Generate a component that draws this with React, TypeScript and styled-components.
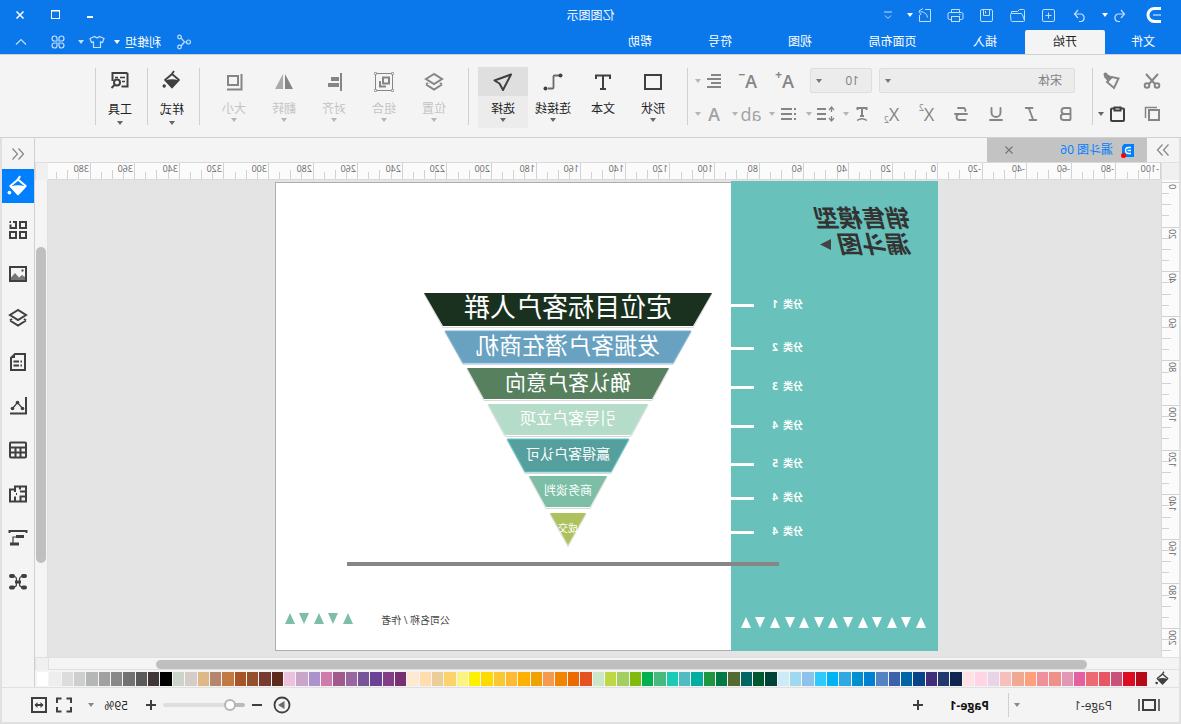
import React, { useEffect, useRef, useState } from "react";
import styled, { createGlobalStyle, css } from "styled-components";
import { Bold, Italic, Underline, Strikethrough } from "lucide-react";

const color = {
  brand: "#0a77eb",
  accent: "#0080ff",
  surface: "#f4f4f4",
  canvas: "#e4e4e4",
  line: "#d0d0d0",
  frame: "#e0e0e0",
  thumb: "#bfbfbf",
  ink: "#3f3f3f",
  icon: "#858585",
  faint: "#c4c4c4",
};

const GlobalStyle = createGlobalStyle`
  * { box-sizing: border-box; }
  body { margin: 0; background: ${color.surface}; }
  body, button, select, input {
    font-family: "Open Sans", "Noto Sans CJK SC", sans-serif;
    font-size: 12px;
  }
  svg { display: block; flex: none; }
`;

const Window = styled.div`
  display: flex;
  flex-direction: column;
  min-height: 100vh;
  transform: scaleX(-1);
  background: ${color.surface};
  color: #222;
`;

const PlainButton = styled.button`
  display: flex;
  align-items: center;
  justify-content: center;
  padding: 0;
  border: 0;
  background: none;
  color: inherit;
  cursor: pointer;
`;

/* ---------- icons ---------- */

type IconProps = { w?: number; h?: number; sw?: number; children: React.ReactNode };
const Icon = ({ w = 20, h = 20, sw = 1, children }: IconProps) => (
  <svg width={w} height={h} viewBox={`0 0 ${w} ${h}`} fill="none" stroke="currentColor" strokeWidth={sw} aria-hidden="true">
    {children}
  </svg>
);

const Caret = () => (
  <svg width="8" height="4" viewBox="0 0 8 4" fill="currentColor" aria-hidden="true">
    <path d="M1 0h6L4 4z" />
  </svg>
);

const LogoIcon = () => (
  <Icon w={16} h={18} sw={3}>
    <path d="M1 2.500h6.500a6.500 6.500 0 0 1 0 13H1" />
    <path d="M1 9h8" stroke="#7ab8fb" strokeWidth="2" />
  </Icon>
);
const UndoIcon = () => (
  <Icon w={19} h={19} sw={1.2}>
    <path d="M8 4L4.500 8L8 12M4.500 8h7a4 4 0 0 1 0 7.500H9" />
  </Icon>
);
const RedoIcon = () => (
  <Icon w={19} h={19} sw={1.2}>
    <path d="M11 4l3.500 4L11 12M14.500 8h-7a4 4 0 0 0 0 7.500H10" />
  </Icon>
);
const NewIcon = () => (
  <Icon w={19} h={19}>
    <rect x="3.500" y="3.500" width="12" height="12" rx="1.500" />
    <path d="M9.500 6.500v6M6.500 9.500h6" />
  </Icon>
);
const OpenIcon = () => (
  <Icon w={19} h={19}>
    <path d="M2.500 14.500v-10q0-1 1-1h4l2 2h6v2M2.500 14.500q0 1 1 1h11q1.300 0 1.500-1l.5-6q0-1-1-1H6q-1 0-1.300 1z" />
  </Icon>
);
const SaveIcon = () => (
  <Icon w={19} h={19}>
    <rect x="3.500" y="3.500" width="12" height="12" rx="1.500" />
    <path d="M6.500 3.500v6h6v-6M10.500 5v2.500" />
  </Icon>
);
const PrintIcon = () => (
  <Icon w={19} h={19}>
    <path d="M5.500 6.500v-3h8v3M5.500 13.500h-2q-1.500 0-1.500-1.500V8q0-1.500 1.500-1.500h12q1.500 0 1.500 1.500v4q0 1.500-1.500 1.500h-2" />
    <rect x="5.500" y="10.500" width="8" height="5" />
    <path d="M4.500 8.500h1.500" />
  </Icon>
);
const ExportIcon = () => (
  <Icon w={19} h={19}>
    <path d="M9 3.500H3.500v12h11V9" />
    <path d="M6.500 11.500q.5-5 7-6M11 2.500l4 2.500-2 4" />
  </Icon>
);
const MoreIcon = () => (
  <Icon w={12} h={12}>
    <path d="M2 3h8M3 6.500l3 3 3-3" />
  </Icon>
);
const MinimizeIcon = () => (
  <Icon w={12} h={12} sw={2}>
    <path d="M3 8h6" />
  </Icon>
);
const MaximizeIcon = () => (
  <Icon w={12} h={12}>
    <rect x="1.500" y="1.500" width="8" height="8" />
    <path d="M1 2h9" />
  </Icon>
);
const CloseIcon = () => (
  <Icon w={12} h={12} sw={1.5}>
    <path d="M2.500 2.500l7 7M9.500 2.500l-7 7" />
  </Icon>
);
const ShareIcon = () => (
  <Icon w={16} h={16} sw={1.2}>
    <circle cx="3.500" cy="8" r="2" />
    <circle cx="12.500" cy="3" r="1.800" />
    <circle cx="12.500" cy="13" r="1.800" />
    <path d="M5.500 8h2l3.500-4M7.500 8l3.500 4" />
  </Icon>
);
const ShirtIcon = () => (
  <Icon w={16} h={16} sw={1.2}>
    <path d="M5.500 2.500q2.500 2.500 5 0l4.500 2-1.500 4-2-.7v5.700h-7V7.800l-2 .7L1 4.500z" />
  </Icon>
);
const AppsIcon = () => (
  <Icon w={16} h={16} sw={1.2}>
    <path d="M7 7H4.300A2.500 2.500 0 1 1 7 4.300zM9 7V4.300A2.500 2.500 0 1 1 11.700 7zM7 9v2.700A2.500 2.500 0 1 1 4.300 9zM9 9h2.700A2.500 2.500 0 1 1 9 11.700z" />
  </Icon>
);
const CollapseIcon = () => (
  <Icon w={16} h={16} sw={1.2}>
    <path d="M3 10.500L8 5.500l5 5" />
  </Icon>
);

const CutIcon = () => (
  <Icon sw={2}>
    <path d="M4 3l9 10M16 3L7 13" />
    <circle cx="5" cy="14.500" r="2.300" />
    <circle cx="15" cy="14.500" r="2.300" />
  </Icon>
);
const PainterIcon = () => (
  <Icon sw={2}>
    <path d="M3.500 7.500L10 6l5 5-7 6z" />
    <path d="M9.500 6L17 2l1 4-4 4.500z" fill="currentColor" stroke="none" />
    <circle cx="16.500" cy="3.500" r="2" fill="currentColor" stroke="none" />
  </Icon>
);
const CopyIcon = () => (
  <Icon>
    <path d="M16.500 14V3.500H5" strokeWidth="1.500" />
    <rect x="3" y="6" width="10" height="10" strokeWidth="2" />
  </Icon>
);
const PasteIcon = () => (
  <Icon sw={2}>
    <path d="M7 4.500H4q-1 0-1 1V16q0 1 1 1h11q1 0 1-1V5.500q0-1-1-1h-3" />
    <path d="M6.500 3.500h6v3h-6z" />
  </Icon>
);
const ParagraphIcon = () => (
  <Icon sw={2}>
    <path d="M3 4h10M3 8h14M3 12h10M3 16h14" strokeWidth="1.800" />
  </Icon>
);
const LineSpacingIcon = () => (
  <Icon sw={2}>
    <path d="M9 5h9M9 10h9M9 15h9" />
    <path d="M3.500 3v5M1 6l2.500-3L6 6M3.500 12v5M1 14l2.500 3L6 14" strokeWidth="1.300" />
  </Icon>
);
const BulletsIcon = () => (
  <Icon sw={2}>
    <path d="M6 5h11M6 10h11M6 15h11M3 4v2M3 9v2M3 14v2" />
  </Icon>
);
const TextStyleIcon = () => (
  <Icon sw={2}>
    <path d="M5.500 6V4h9v2M10 4v8M8 12h4" />
    <path d="M5 16.500q5-3.500 10 0" strokeWidth="1.500" />
  </Icon>
);
const ShapeIcon = () => (
  <Icon sw={2}>
    <rect x="2" y="3" width="16" height="14" />
  </Icon>
);
const TextIcon = () => (
  <Icon sw={2}>
    <path d="M3 7V3.500h14V7M10 3.500V17M7 17h6" />
  </Icon>
);
const ConnectorIcon = () => (
  <Icon sw={2}>
    <path d="M4 3.500h4.500q1 0 1 1v11q0 1 1 1H15" stroke="#6b6b6b" strokeWidth="1.800" />
    <circle cx="2.500" cy="3.500" r="2" fill="currentColor" stroke="none" />
    <circle cx="17.500" cy="16.500" r="2" fill="currentColor" stroke="none" />
  </Icon>
);
const SelectIcon = () => (
  <Icon sw={2}>
    <path d="M2 2.500L18.500 8.500 13.500 11.500 10 18z" strokeLinejoin="round" />
  </Icon>
);
const LayersIcon = () => (
  <Icon sw={2}>
    <path d="M10 2l8 5-8 5-8-5z" />
    <path d="M2 12.500l8 5 8-5M2 12.500l2-1.500M18 12.500L16 11" />
  </Icon>
);
const GroupIcon = () => (
  <Icon>
    <rect x="1.500" y="1.500" width="17" height="17" />
    <g fill="#f4f4f4">
      <circle cx="1.500" cy="1.500" r="1.200" />
      <circle cx="18.500" cy="1.500" r="1.200" />
      <circle cx="1.500" cy="18.500" r="1.200" />
      <circle cx="18.500" cy="18.500" r="1.200" />
    </g>
    <g strokeWidth="2">
      <rect x="5" y="5.500" width="6" height="6" />
      <path d="M14 9v5.500H8" />
    </g>
  </Icon>
);
const AlignIcon = () => (
  <Icon>
    <path d="M3 1v18" strokeWidth="2" />
    <path d="M5 5h8v4H5zM5 11h11v4H5z" fill="currentColor" stroke="none" />
  </Icon>
);
const FlipIcon = () => (
  <Icon>
    <path d="M9 2v15H1z" fill="#858585" stroke="none" />
    <path d="M11 2v15h8z" fill="#aaaaaa" stroke="none" />
  </Icon>
);
const SizeIcon = () => (
  <Icon sw={2}>
    <rect x="6" y="4" width="10" height="9" />
    <path d="M2.500 2v15.500H17" />
  </Icon>
);
const BucketIcon = ({ size = 20 }: { size?: number }) => (
  <svg width={size} height={size} viewBox="0 0 20 20" fill="none" stroke="currentColor" strokeWidth="1.800" aria-hidden="true">
    <path d="M8 1l2.500 3.500L17 10l-7 7.500L3 10l7-6" strokeLinejoin="round" />
    <path d="M3.500 10.500q6.500-2.500 13 0L10 17.500z" fill="currentColor" stroke="none" />
    <circle cx="17.800" cy="16" r="1.700" fill="currentColor" stroke="none" />
  </svg>
);
const ToolsIcon = () => (
  <Icon sw={2}>
    <path d="M2.500 3v13.500h6M2.500 3h15v8" />
    <path d="M12 7.500h3M5 7.500h5M5 11.500h3" strokeWidth="1.300" />
    <circle cx="13" cy="12.500" r="3" fill="#f4f4f4" />
    <path d="M15 14.500l3.500 3.500" />
  </Icon>
);
const ChevronsRight = () => (
  <Icon w={14} h={14} sw={1.2}>
    <path d="M1.500 1.500L6.500 7l-5 5.500M7.500 1.500L12.500 7l-5 5.500" />
  </Icon>
);
const ChevronsLeft = () => (
  <Icon w={14} h={14} sw={1.2}>
    <path d="M12.500 1.500L7.500 7l5 5.500M6.500 1.500L1.500 7l5 5.500" />
  </Icon>
);
const FileIcon = () => (
  <svg width="14" height="15" viewBox="0 0 14 15" aria-hidden="true">
    <path d="M1 1h10l2 2.500V14H1z" fill={color.accent} />
    <path d="M4 4.500h2.500a3 3 0 0 1 0 6H4M4 7.500h3.500" fill="none" stroke="#fff" strokeWidth="1.300" />
    <circle cx="11.500" cy="12.500" r="2.500" fill="#f00" />
  </svg>
);
const GridIcon = () => (
  <Icon sw={2}>
    <rect x="2" y="2" width="6" height="6" />
    <path d="M17.500 4.500V8H12V2h3M17 2h1.500" />
    <rect x="2" y="12" width="6" height="6" />
    <rect x="12" y="12" width="6" height="6" />
  </Icon>
);
const ImageIcon = () => (
  <Icon sw={2}>
    <rect x="2" y="3" width="16" height="14" />
    <path d="M3 16v-3l3-2 3 2.500L13 9l4 4.500V16z" fill="#777" stroke="none" />
    <rect x="4.500" y="5.500" width="2" height="2" fill="currentColor" stroke="none" />
  </Icon>
);
const NoteIcon = () => (
  <Icon sw={2}>
    <path d="M3 2h10l4 4v12H3z" />
    <path d="M13 2v4h4z" fill="currentColor" stroke="none" />
    <path d="M6 9.500h1.500M9 9.500h5.500M6 13.500h1.500M9 13.500h5.500" />
  </Icon>
);
const ChartIcon = () => (
  <Icon sw={2}>
    <path d="M2 1v16.500h16" />
    <path d="M5.500 12.500l5-6 5 6" strokeWidth="1.200" />
    <g fill="currentColor" stroke="none">
      <circle cx="5.500" cy="12.500" r="1.800" />
      <circle cx="10.500" cy="6.500" r="1.800" />
      <circle cx="15.500" cy="12.500" r="1.800" />
    </g>
  </Icon>
);
const TableIcon = () => (
  <Icon sw={2}>
    <rect x="2" y="2.500" width="16" height="15" rx="1" />
    <path d="M2 7.500h16M2 12.500h16M7.500 7.500v10M12.500 7.500v10" />
  </Icon>
);
const PlanIcon = () => (
  <Icon sw={2}>
    <path d="M2 2.500h11v3h5v12H2z" />
    <path d="M2 7.500h6M8 2.500v3M13 6v2M2 12.500h5.500V17M13 12.500V17M11 10h1" />
  </Icon>
);
const GanttIcon = () => (
  <Icon sw={2}>
    <path d="M1.500 5V3h17v2" />
    <path d="M4 8.500h8M9 16h9" strokeWidth="3" />
    <path d="M12 9h3v7" strokeWidth="1.200" />
  </Icon>
);
const MindMapIcon = () => (
  <Icon sw={2}>
    <path d="M4 4.500h2q2.500 0 2.500 3v4.500q0 3-2.500 3H4M16 4.500h-2q-2.500 0-2.500 3v4.500q0 3 2.500 3h2" strokeWidth="1.200" />
    <g strokeWidth="4" strokeLinecap="round">
      <path d="M3 4h2M3 15.500h2M15 4h2M15 15.500h2" />
    </g>
    <path d="M7 10h6" strokeWidth="3" />
  </Icon>
);
const PageViewIcon = () => (
  <Icon w={22} h={16} sw={2}>
    <rect x="5" y="3" width="12" height="10" />
    <path d="M1 2v12M21 2v12" strokeWidth="1.500" />
  </Icon>
);
const PlusIcon = () => (
  <Icon w={10} h={10} sw={2}>
    <path d="M5 0v10M0 5h10" />
  </Icon>
);
const MinusIcon = () => (
  <Icon w={10} h={10} sw={2}>
    <path d="M0 5h10" />
  </Icon>
);
const PlayIcon = () => (
  <Icon w={18} h={18} sw={1.8}>
    <circle cx="9" cy="9" r="7.500" />
    <path d="M6.500 5L13 9l-6.500 4z" fill="#6b6b6b" stroke="none" />
  </Icon>
);
const FullScreenIcon = () => (
  <Icon w={18} h={18} sw={2}>
    <path d="M2 7V2.500h4.500M11.500 2.500H16V7M16 11v4.500h-4.500M6.500 15.500H2V11" />
  </Icon>
);
const FitWidthIcon = () => (
  <Icon w={18} h={18} sw={2}>
    <rect x="2" y="2" width="14" height="14" />
    <path d="M5 9h8" />
    <path d="M7.500 6L4.500 9l3 3zM10.500 6l3 3-3 3z" fill="currentColor" stroke="none" />
  </Icon>
);

/* ---------- title bar and menu ---------- */

const Header = styled.header`
  background: ${color.brand};
  color: #fff;
`;
const TitleRow = styled.div`
  display: grid;
  grid-template-columns: 1fr auto 1fr;
  align-items: center;
  height: 30px;
`;
const QuickBar = styled.div`
  display: flex;
  align-items: center;
  gap: 12px;
  padding-left: 19px;
`;
const Logo = styled.div`
  margin-right: 5px;
`;
const QuickItem = styled.div`
  display: flex;
  align-items: center;
  gap: 1px;
`;
const HeaderButton = styled(PlainButton)`
  color: #c5dffb;
`;
const AppTitle = styled.h1`
  margin: 0;
  font-size: 12px;
  font-weight: 400;
`;
const WindowControls = styled.div`
  display: flex;
  justify-content: flex-end;
  padding-right: 3px;
`;
const WindowButton = styled(PlainButton)`
  width: 35px;
  height: 28px;
`;
const MenuRow = styled.div`
  display: flex;
  justify-content: space-between;
  height: 24px;
`;
const Menu = styled.nav`
  display: flex;
`;
const MenuTab = styled.button<{ $width?: number; $active?: boolean }>`
  width: ${(p) => p.$width ?? 80}px;
  padding: 0;
  border: 0;
  border-radius: 2px 2px 0 0;
  line-height: 24px;
  background: ${(p) => (p.$active ? color.surface : "none")};
  color: ${(p) => (p.$active ? "#222" : "#fff")};
`;
const Account = styled.div`
  display: flex;
  align-items: center;
  gap: 8px;
  padding-right: 13px;
`;
const AccountButton = styled(HeaderButton)`
  gap: 4px;
`;
const AccountName = styled(AccountButton)`
  margin-left: 7px;
  color: #fff;
`;
const AppsButton = styled(HeaderButton)`
  margin: 0 13px 0 3px;
`;

/* ---------- ribbon ---------- */

const Ribbon = styled.div`
  display: flex;
  height: 84px;
  padding: 12px 2px 9px;
  border-top: 1px solid ${color.line};
  border-bottom: 1px solid ${color.line};
`;
const Group = styled.section<{ $pad?: string }>`
  display: flex;
  padding: ${(p) => p.$pad ?? "0 9px"};
`;
const Divider = styled.div`
  flex: none;
  width: 1px;
  height: 57px;
  margin-top: 1px;
  background: ${color.line};
`;
const ClipboardGrid = styled.div`
  display: grid;
  grid-template-columns: 34px 34px;
  grid-template-rows: 25px 24px;
  gap: 9px 6px;
  margin-top: 1px;
  align-items: center;
  color: ${color.icon};
`;
const TextTools = styled.div`
  display: flex;
  flex-direction: column;
  gap: 9px;
  margin-top: 1px;
  color: ${color.icon};
`;
const ToolRow = styled.div<{ $indent?: boolean }>`
  display: flex;
  align-items: center;
  height: ${(p) => (p.$indent ? 25 : 24)}px;
  padding-left: ${(p) => (p.$indent ? 9 : 0)}px;
`;
const ToolButton = styled(PlainButton)<{ $width?: number }>`
  width: ${(p) => p.$width ?? 35}px;
  height: 24px;
`;
const Small = styled.small<{ $low?: boolean; $bold?: boolean }>`
  align-self: ${(p) => (p.$low ? "flex-end" : "flex-start")};
  font-size: ${(p) => (p.$bold ? 12 : 9)}px;
  line-height: 12px;
  font-weight: ${(p) => (p.$bold ? 700 : 400)};
`;
const Glyph = styled.span<{ $bold?: boolean; $faint?: boolean }>`
  font-size: 18px;
  font-weight: ${(p) => (p.$bold ? 600 : 400)};
  line-height: 20px;
  color: ${(p) => (p.$faint ? "#a2a2a2" : "inherit")};
`;
const SizeButtons = styled.div`
  display: flex;
  margin: 0 3px 0 7px;
`;
const SplitButton = styled(PlainButton)<{ $dark?: boolean }>`
  width: 37px;
  height: 24px;
  justify-content: flex-start;
  color: ${(p) => (p.$dark ? color.ink : "inherit")};
`;
const SplitIcon = styled.span`
  display: flex;
  justify-content: center;
  width: 24px;
`;
const CaretTone = styled.span<{ $tone: string }>`
  display: block;
  color: ${(p) => p.$tone};
`;
const SelectWrap = styled.label<{ $gap?: number }>`
  display: grid;
  align-items: center;
  margin-left: ${(p) => p.$gap ?? 0}px;
  > * { grid-area: 1 / 1; }
  > span { justify-self: end; pointer-events: none; }
`;
const FieldSelect = styled.select<{ $width: number }>`
  appearance: none;
  width: ${(p) => p.$width}px;
  height: 25px;
  padding: 0 20px 0 12px;
  border: 1px solid #dedede;
  border-radius: 2px;
  background: #ececec;
  color: #808080;
`;
const FieldCaret = styled.span`
  padding-right: 5px;
  color: #777;
`;
const BigIcon = styled.span`
  display: grid;
  place-items: center;
  width: 100%;
  height: 29px;
`;
const BigButton = styled.button<{ $active?: boolean; $disabled?: boolean; $roomy?: boolean }>`
  display: flex;
  flex-direction: column;
  align-items: center;
  width: ${(p) => (p.$roomy ? 48 : 50)}px;
  height: 61px;
  padding: 0;
  border: 0;
  border-radius: 2px;
  background: none;
  color: ${color.ink};
  white-space: nowrap;
  ${(p) => p.$active && css`
    background: #ececec;
    ${BigIcon} { background: #dfdfdf; }
  `}
  ${(p) => p.$disabled && css`
    color: ${color.faint};
    ${BigIcon} { color: ${color.icon}; }
  `}
  ${(p) => p.$roomy && css`
    ${BigIcon} { height: 26px; }
  `}
`;
const BigLabel = styled.span<{ $roomy?: boolean; $disabled?: boolean }>`
  padding-top: ${(p) => (p.$roomy ? 9 : 5)}px;
  padding-bottom: ${(p) => (p.$roomy ? 3 : 1)}px;
  line-height: 16px;
  color: ${(p) => (p.$disabled ? color.faint : "#222")};
`;

type BigProps = { icon: React.ReactNode; label: string; caret?: boolean; active?: boolean; disabled?: boolean; roomy?: boolean };
const Big = ({ icon, label, caret = true, active, disabled, roomy }: BigProps) => (
  <BigButton type="button" $active={active} $disabled={disabled} $roomy={roomy}>
    <BigIcon>{icon}</BigIcon>
    <BigLabel $roomy={roomy} $disabled={disabled}>{label}</BigLabel>
    {caret && <CaretTone $tone={disabled ? "#b5b5b5" : "#666"}><Caret /></CaretTone>}
  </BigButton>
);

const Split = ({ label, dark, children }: { label: string; dark?: boolean; children: React.ReactNode }) => (
  <SplitButton type="button" aria-label={label} $dark={dark}>
    <SplitIcon>{children}</SplitIcon>
    <CaretTone $tone={dark ? "#666" : "#b5b5b5"}><Caret /></CaretTone>
  </SplitButton>
);

/* ---------- workspace ---------- */

const Main = styled.main`
  display: flex;
  flex: 1;
  min-height: 549px;
  padding: 0 2px;
  background: linear-gradient(${color.frame}, ${color.frame}) left / 2px 100% no-repeat,
    linear-gradient(${color.frame}, ${color.frame}) right / 2px 100% no-repeat;
`;
const Work = styled.div`
  display: flex;
  flex-direction: column;
  flex: 1;
  min-width: 0;
`;
const TabStrip = styled.div`
  display: flex;
  height: 24px;
`;
const ExpandButton = styled(PlainButton)`
  width: 32px;
  color: ${color.icon};
`;
const DocTab = styled.div`
  display: flex;
  align-items: center;
  width: 160px;
  padding: 0 17px 0 12px;
  background: #c3c3c3;
`;
const DocName = styled.span`
  flex: 1;
  padding-left: 8px;
  line-height: 20px;
  color: ${color.accent};
`;
const DocClose = styled(PlainButton)`
  color: #777;
`;
const Editor = styled.div`
  display: grid;
  flex: 1;
  grid-template-columns: 18px minmax(0, 1fr) 13px;
  grid-template-rows: 18px minmax(0, 1fr) 13px;
`;
const Corner = styled.div`
  border: solid ${color.frame};
  border-width: 1px 1px 0 0;
  background: #f0f0f0;
`;
const RulerBox = styled.div<{ $vertical?: boolean }>`
  overflow: hidden;
  background: #fbfbfb;
  border: 0 solid #dadada;
  ${(p) => (p.$vertical ? css`border-right-width: 1px;` : css`border-top-width: 1px; border-bottom-width: 1px;`)}
  contain: size;
`;
const Canvas = styled.div`
  overflow: hidden;
  padding: 1px 0 0 223px;
  background: ${color.canvas};
`;
const VTrack = styled.div`
  padding: 67px 1px 0 1px;
  border-left: 1px solid ${color.frame};
`;
const VThumb = styled.div`
  height: 77%;
  border-radius: 5px;
  background: ${color.thumb};
`;
const HTrack = styled.div`
  grid-column: 1 / 3;
  padding: 2px 0 1px;
  border: solid ${color.frame};
  border-width: 1px 1px 1px 0;
`;
const HThumb = styled.div`
  width: 82.4%;
  height: 9px;
  margin-left: 92px;
  border-radius: 5px;
  background: ${color.thumb};
`;
const Palette = styled.div`
  display: flex;
  align-items: center;
  height: 17px;
`;
const PaletteIcon = styled.div`
  display: grid;
  place-items: center;
  width: 32px;
  color: ${color.ink};
`;
const Swatches = styled.div`
  display: flex;
  flex: 1;
  gap: 1px;
  padding-right: 2px;
`;
const Swatch = styled.button<{ $fill: string }>`
  flex: 1;
  min-width: 0;
  height: 14px;
  padding: 0;
  border: 0;
  background: ${(p) => p.$fill};
`;
const SideBar = styled.aside`
  display: flex;
  flex-direction: column;
  gap: 10px;
  width: 33px;
  border-left: 1px solid ${color.line};
`;
const SideTop = styled(PlainButton)`
  height: 31px;
  margin-bottom: -10px;
  color: ${color.icon};
`;
const SideButton = styled(PlainButton)<{ $active?: boolean }>`
  height: 34px;
  background: ${(p) => (p.$active ? color.accent : "none")};
  color: ${(p) => (p.$active ? "#fff" : color.ink)};
`;

/* ---------- status bar ---------- */

const StatusBar = styled.footer`
  display: flex;
  align-items: center;
  justify-content: space-between;
  height: 37px;
  padding: 0 28px 0 19px;
  border: 2px solid ${color.frame};
  border-top: 1px solid ${color.frame};
`;
const StatusGroup = styled.div`
  display: flex;
  align-items: center;
  color: ${color.ink};
`;
const Zoom = styled(StatusGroup)`
  gap: 7px;
`;
const PageSelect = styled.select`
  appearance: none;
  width: 104px;
  height: 24px;
  padding: 0;
  border: 0;
  border-right: 1px solid ${color.line};
  background: none;
  color: #333;
`;
const PageTab = styled(PlainButton)`
  margin: 0 27px 0 19px;
  font-weight: 700;
  color: #111;
`;
const ZoomSelect = styled.select`
  appearance: none;
  width: 42px;
  height: 24px;
  padding: 0;
  border: 0;
  background: none;
  color: #222;
`;
const SmallCaret = styled.span`
  padding-right: 1px;
  color: #888;
`;
const PageCaret = styled(SmallCaret)`
  padding-right: 5px;
`;
const ZoomButton = styled(PlainButton)<{ $before?: number; $after?: number }>`
  margin-left: ${(p) => p.$before ?? 0}px;
  margin-right: ${(p) => p.$after ?? 0}px;
`;
const Slider = styled.input`
  appearance: none;
  width: 82px;
  height: 4px;
  margin: 0;
  border-radius: 2px;
  background: linear-gradient(to right, #bbb 15px, #dedede 15px);
  &::-webkit-slider-thumb {
    appearance: none;
    width: 12px;
    height: 12px;
    border: 2px solid #b5b5b5;
    border-radius: 50%;
    background: #fff;
  }
`;

/* ---------- rulers ---------- */

const MAJOR = 44.6;
const LABEL_ROOM = 20;
const tickLength = (i: number) => (i % 4 === 0 ? 18 : i % 2 === 0 ? 9 : 7);

/* Length in pixels of the ruler's box, so that only the ticks that fit are drawn. */
function useLength(axis: "width" | "height") {
  const ref = useRef<HTMLDivElement>(null);
  const [length, setLength] = useState(0);
  useEffect(() => {
    const box = ref.current;
    if (!box) return;
    const read = () => setLength(axis === "width" ? box.clientWidth : box.clientHeight);
    read();
    const observer = new ResizeObserver(read);
    observer.observe(box);
    return () => observer.disconnect();
  }, [axis]);
  return [ref, length] as const;
}

const ticksIn = (length: number) =>
  Array.from({ length: Math.max(0, Math.ceil((length * 4) / MAJOR)) }, (_, i) => ({
    i,
    at: Math.round((i * MAJOR) / 4),
  }));

const HorizontalRuler = () => {
  const [ref, length] = useLength("width");
  return (
    <RulerBox ref={ref}>
      <svg width={length} height="16" aria-hidden="true">
        {ticksIn(length).map(({ i, at }) => (
          <g key={i}>
            <path d={`M${at + 0.5} 16v-${tickLength(i)}`} stroke="#d2d2d2" />
            {i % 4 === 0 && at + LABEL_ROOM < length && (
              <text x={at + 2} y="9" fontSize="9" fill="#666">{-100 + i * 5}</text>
            )}
          </g>
        ))}
      </svg>
    </RulerBox>
  );
};

const VerticalRuler = () => {
  const [ref, length] = useLength("height");
  return (
    <RulerBox $vertical ref={ref}>
      <svg width="17" height={length} aria-hidden="true">
        {ticksIn(length).map(({ i, at }) => (
          <g key={i}>
            <path d={`M17 ${at + 2.5}h-${tickLength(i)}`} stroke="#d2d2d2" />
            {i % 4 === 0 && at + LABEL_ROOM < length && (
              <text transform={`translate(10 ${at + 4}) rotate(-90)`} textAnchor="end" fontSize="9" fill="#666">{i * 5}</text>
            )}
          </g>
        ))}
      </svg>
    </RulerBox>
  );
};

/* ---------- the drawing on the page ---------- */

type Stage = { label: string; top: number; bottom: number; a: number; b: number; fill: string; edge?: string; size: number };
const stages: Stage[] = [
  { label: "定位目标客户人群", top: 112, bottom: 145, a: 144, b: 125, fill: "#1b3120", size: 26 },
  { label: "发掘客户潜在商机", top: 150, bottom: 182, a: 123, b: 105, fill: "#69a1c1", edge: "#6fb0dc", size: 23 },
  { label: "确认客户意向", top: 187, bottom: 218, a: 101, b: 84, fill: "#57805e", size: 21 },
  { label: "引导客户立项", top: 223, bottom: 254, a: 80, b: 63, fill: "#b4dcc8", size: 16 },
  { label: "赢得客户认可", top: 258, bottom: 291, a: 61, b: 43, fill: "#55a09e", edge: "#5cc8c4", size: 14 },
  { label: "商务谈判", top: 295, bottom: 326, a: 39, b: 22, fill: "#7cbfa6", size: 12 },
  { label: "成交", top: 332, bottom: 364, a: 18, b: 0, fill: "#adc25c", size: 10 },
];
const CX = 370;

const categories = [
  { no: 1, y: 124 },
  { no: 2, y: 167 },
  { no: 3, y: 206 },
  { no: 4, y: 245 },
  { no: 5, y: 283 },
  { no: 4, y: 317 },
  { no: 4, y: 351 },
];

const triangle = (x: number, y: number, up: boolean) =>
  up ? `M${x} ${y}l5 11h-10z` : `M${x - 5} ${y}h10l-5 11z`;

const Drawing = () => (
  <svg width="663" height="470" viewBox="0 0 663 470" role="img" aria-label="销售模型漏斗图">
    <rect x="0.500" y="1.500" width="662" height="468" fill="#fff" stroke="#adadad" />
    <rect width="207" height="470" fill="#68c2bb" />
    <g fill="#333" fontSize="24" fontWeight="700" fontStyle="italic">
      <text x="26" y="46">销售模型</text>
      <text x="26" y="72">漏斗图</text>
    </g>
    <path d="M107 58l11 5.500-11 5.500z" fill="#444" />
    {categories.map((c, i) => (
      <g key={i} fill="#fff">
        <text x="135" y={c.y + 3} fontSize="10" fontWeight="700">
          分类 <tspan x="160">{c.no}</tspan>
        </text>
        <rect x="184" y={c.y - 1} width="23" height="3" />
      </g>
    ))}
    {Array.from({ length: 13 }, (_, i) => (
      <path key={i} d={triangle(17 + Math.round(i * 14.6), 436, i % 2 === 0)} fill="#fff" />
    ))}
    {stages.map((s) => (
      <g key={s.label}>
        <path d={`M${CX - s.a} ${s.top + 1}L${CX - s.b} ${s.bottom + 1.5}h${2 * s.b}L${CX + s.a} ${s.top + 1}`} fill="none" stroke="#d8d8d8" />
        <path d={`M${CX - s.a} ${s.top}h${2 * s.a}L${CX + s.b} ${s.bottom}h${-2 * s.b}z`} fill={s.fill} stroke={s.edge} />
        <text x={CX} y={Math.floor((s.top + s.bottom) / 2 + s.size * 0.31)} fontSize={s.size} textAnchor="middle" fill="#fff">
          {s.label}
        </text>
      </g>
    ))}
    <rect x="159" y="381" width="432" height="4" fill="#868686" />
    <text x="488" y="443" fontSize="10" fill="#444">公司名称 / 作者</text>
    {Array.from({ length: 5 }, (_, i) => (
      <path key={i} d={triangle(590 + Math.round(i * 14.6), 432, i % 2 === 0)} fill="#7cbfa6" />
    ))}
  </svg>
);

const swatches = (
  "b50a17 dd0c20 c8527a e85565 ec6b72 e6609f e198b5 ef9089 f0909b ff9f7b efa993 f6bfbb e8d3e7 ffd4e4 ffe1e6 " +
  "10264f 22386f 402e7a 084489 0066a3 3d60ad 5283c3 0080cf 0090d0 2fa9e1 00b3f2 2fcafc 8cc2ec a0d8ef cdebf6 " +
  "004237 00582f 006661 546a30 007a45 1f953f 00afa0 50bcc1 1accb5 48bb7c 00b150 80ba0f a3cf60 bed742 cce7c8 " +
  "e45222 ec6a00 f18500 f4994f f0a300 ffb000 ffb935 fac832 ffda00 fff000 fdf385 fdd26b ebcd98 ffddac fee9d3 " +
  "792f70 833f85 6a4297 775498 9a669f a05a8e cf7bae ab92cf c8a5c9 ecc1db 5d2a1b 783a30 945028 a85427 c27a41 " +
  "b5866d deb887 d4ccc6 cad4ca 000000 3f3837 5b595a 717271 898989 a0a1a0 b5b7b7 cdcecd dcdcdc eeeeee ffffff"
).split(" ");

const sideItems: [string, React.ReactNode][] = [
  ["填充", <BucketIcon size={22} />],
  ["符号库", <GridIcon />],
  ["图片", <ImageIcon />],
  ["图层", <LayersIcon />],
  ["注释", <NoteIcon />],
  ["图表", <ChartIcon />],
  ["表格", <TableIcon />],
  ["平面图", <PlanIcon />],
  ["甘特图", <GanttIcon />],
  ["思维导图", <MindMapIcon />],
];

export default function App() {
  return (
    <>
      <GlobalStyle />
      <Window>
        <Header>
          <TitleRow>
            <QuickBar>
              <Logo><LogoIcon /></Logo>
              <QuickItem>
                <HeaderButton type="button" aria-label="撤销"><UndoIcon /></HeaderButton>
                <Caret />
              </QuickItem>
              <HeaderButton type="button" aria-label="重做"><RedoIcon /></HeaderButton>
              <HeaderButton type="button" aria-label="新建"><NewIcon /></HeaderButton>
              <HeaderButton type="button" aria-label="打开"><OpenIcon /></HeaderButton>
              <HeaderButton type="button" aria-label="保存"><SaveIcon /></HeaderButton>
              <HeaderButton type="button" aria-label="打印"><PrintIcon /></HeaderButton>
              <QuickItem>
                <HeaderButton type="button" aria-label="导出"><ExportIcon /></HeaderButton>
                <Caret />
              </QuickItem>
              <HeaderButton type="button" aria-label="更多"><MoreIcon /></HeaderButton>
            </QuickBar>
            <AppTitle>亿图图示</AppTitle>
            <WindowControls>
              <WindowButton type="button" aria-label="最小化"><MinimizeIcon /></WindowButton>
              <WindowButton type="button" aria-label="最大化"><MaximizeIcon /></WindowButton>
              <WindowButton type="button" aria-label="关闭"><CloseIcon /></WindowButton>
            </WindowControls>
          </TitleRow>
          <MenuRow>
            <Menu>
              <MenuTab $width={76}>文件</MenuTab>
              <MenuTab $active>开始</MenuTab>
              <MenuTab>插入</MenuTab>
              <MenuTab $width={105}>页面布局</MenuTab>
              <MenuTab>视图</MenuTab>
              <MenuTab>符号</MenuTab>
              <MenuTab>帮助</MenuTab>
            </Menu>
            <Account>
              <HeaderButton type="button" aria-label="分享"><ShareIcon /></HeaderButton>
              <AccountName type="button">利维坦<Caret /></AccountName>
              <AccountButton type="button" aria-label="主题"><ShirtIcon /><Caret /></AccountButton>
              <AppsButton type="button" aria-label="应用"><AppsIcon /></AppsButton>
              <HeaderButton type="button" aria-label="收起"><CollapseIcon /></HeaderButton>
            </Account>
          </MenuRow>
        </Header>

        <Ribbon>
          <Group $pad="0 2px 0 10px">
            <ClipboardGrid>
              <ToolButton type="button" aria-label="剪切" $width={34}><CutIcon /></ToolButton>
              <ToolButton type="button" aria-label="格式刷" $width={34}><PainterIcon /></ToolButton>
              <ToolButton type="button" aria-label="复制" $width={34}><CopyIcon /></ToolButton>
              <Split label="粘贴" dark><PasteIcon /></Split>
            </ClipboardGrid>
          </Group>
          <Divider />
          <Group $pad="0 1px 0 8px">
            <TextTools>
              <ToolRow $indent>
                <SelectWrap>
                  <FieldSelect $width={196} aria-label="字体"><option>宋体</option></FieldSelect>
                  <FieldCaret><Caret /></FieldCaret>
                </SelectWrap>
                <SelectWrap $gap={7}>
                  <FieldSelect $width={62} aria-label="字号"><option>10</option></FieldSelect>
                  <FieldCaret><Caret /></FieldCaret>
                </SelectWrap>
                <SizeButtons>
                  <ToolButton type="button" aria-label="增大字号" $width={37}><Glyph $bold>A</Glyph><Small $bold>+</Small></ToolButton>
                  <ToolButton type="button" aria-label="减小字号" $width={37}><Glyph $bold>A</Glyph><Small $bold>−</Small></ToolButton>
                </SizeButtons>
                <Split label="对齐方式"><ParagraphIcon /></Split>
              </ToolRow>
              <ToolRow>
                <ToolButton type="button" aria-label="加粗"><Bold size={18} strokeWidth={2.5} /></ToolButton>
                <ToolButton type="button" aria-label="斜体"><Italic size={18} strokeWidth={2.5} /></ToolButton>
                <ToolButton type="button" aria-label="下划线"><Underline size={18} strokeWidth={2.5} /></ToolButton>
                <ToolButton type="button" aria-label="删除线"><Strikethrough size={18} strokeWidth={2.5} /></ToolButton>
                <ToolButton type="button" aria-label="上标"><Glyph>X</Glyph><Small>2</Small></ToolButton>
                <ToolButton type="button" aria-label="下标"><Glyph>X</Glyph><Small $low>2</Small></ToolButton>
                <Split label="文字样式"><TextStyleIcon /></Split>
                <Split label="行距"><LineSpacingIcon /></Split>
                <Split label="项目符号"><BulletsIcon /></Split>
                <Split label="突出显示"><Glyph $faint>ab</Glyph></Split>
                <Split label="字体颜色"><Glyph $bold $faint>A</Glyph></Split>
              </ToolRow>
            </TextTools>
          </Group>
          <Divider />
          <Group>
            <Big icon={<ShapeIcon />} label="形状" />
            <Big icon={<TextIcon />} label="文本" caret={false} />
            <Big icon={<ConnectorIcon />} label="连接线" />
            <Big icon={<SelectIcon />} label="选择" active />
          </Group>
          <Divider />
          <Group>
            <Big icon={<LayersIcon />} label="位置" disabled />
            <Big icon={<GroupIcon />} label="组合" disabled />
            <Big icon={<AlignIcon />} label="对齐" disabled />
            <Big icon={<FlipIcon />} label="翻转" disabled />
            <Big icon={<SizeIcon />} label="大小" disabled />
          </Group>
          <Divider />
          <Group $pad="0 0 0 3px"><Big icon={<BucketIcon />} label="样式" roomy /></Group>
          <Divider />
          <Group $pad="0 0 0 3px"><Big icon={<ToolsIcon />} label="工具" roomy /></Group>
          <Divider />
        </Ribbon>

        <Main>
          <Work>
            <TabStrip>
              <ExpandButton type="button" aria-label="展开"><ChevronsRight /></ExpandButton>
              <DocTab>
                <FileIcon />
                <DocName>漏斗图 06</DocName>
                <DocClose type="button" aria-label="关闭文档"><Icon w={10} h={10} sw={1.2}><path d="M1.500 1.500l7 7M8.500 1.500l-7 7" /></Icon></DocClose>
              </DocTab>
            </TabStrip>
            <Editor>
              <Corner />
              <HorizontalRuler />
              <Corner />
              <VerticalRuler />
              <Canvas><Drawing /></Canvas>
              <VTrack><VThumb /></VTrack>
              <HTrack><HThumb /></HTrack>
              <Corner />
            </Editor>
            <Palette>
              <PaletteIcon><BucketIcon size={15} /></PaletteIcon>
              <Swatches>
                {swatches.map((c) => (
                  <Swatch key={c} type="button" aria-label={`#${c}`} $fill={`#${c}`} />
                ))}
              </Swatches>
            </Palette>
          </Work>
          <SideBar>
            <SideTop type="button" aria-label="收起侧栏"><ChevronsLeft /></SideTop>
            {sideItems.map(([label, icon], i) => (
              <SideButton key={label} type="button" aria-label={label} $active={i === 0}>{icon}</SideButton>
            ))}
          </SideBar>
        </Main>

        <StatusBar>
          <StatusGroup>
            <PageViewIcon />
            <SelectWrap $gap={26}>
              <PageSelect aria-label="页面"><option>Page-1</option></PageSelect>
              <PageCaret><Caret /></PageCaret>
            </SelectWrap>
            <PageTab type="button">Page-1</PageTab>
            <PlainButton type="button" aria-label="新增页面"><PlusIcon /></PlainButton>
          </StatusGroup>
          <Zoom>
            <ZoomButton type="button" aria-label="播放" $after={4}><PlayIcon /></ZoomButton>
            <ZoomButton type="button" aria-label="缩小"><MinusIcon /></ZoomButton>
            <Slider type="range" min={0} max={100} defaultValue={13} aria-label="缩放" />
            <ZoomButton type="button" aria-label="放大" $after={11}><PlusIcon /></ZoomButton>
            <SelectWrap>
              <ZoomSelect aria-label="缩放比例"><option>59%</option></ZoomSelect>
              <SmallCaret><Caret /></SmallCaret>
            </SelectWrap>
            <ZoomButton type="button" aria-label="全屏" $before={6}><FullScreenIcon /></ZoomButton>
            <ZoomButton type="button" aria-label="适合宽度"><FitWidthIcon /></ZoomButton>
          </Zoom>
        </StatusBar>
      </Window>
    </>
  );
}
